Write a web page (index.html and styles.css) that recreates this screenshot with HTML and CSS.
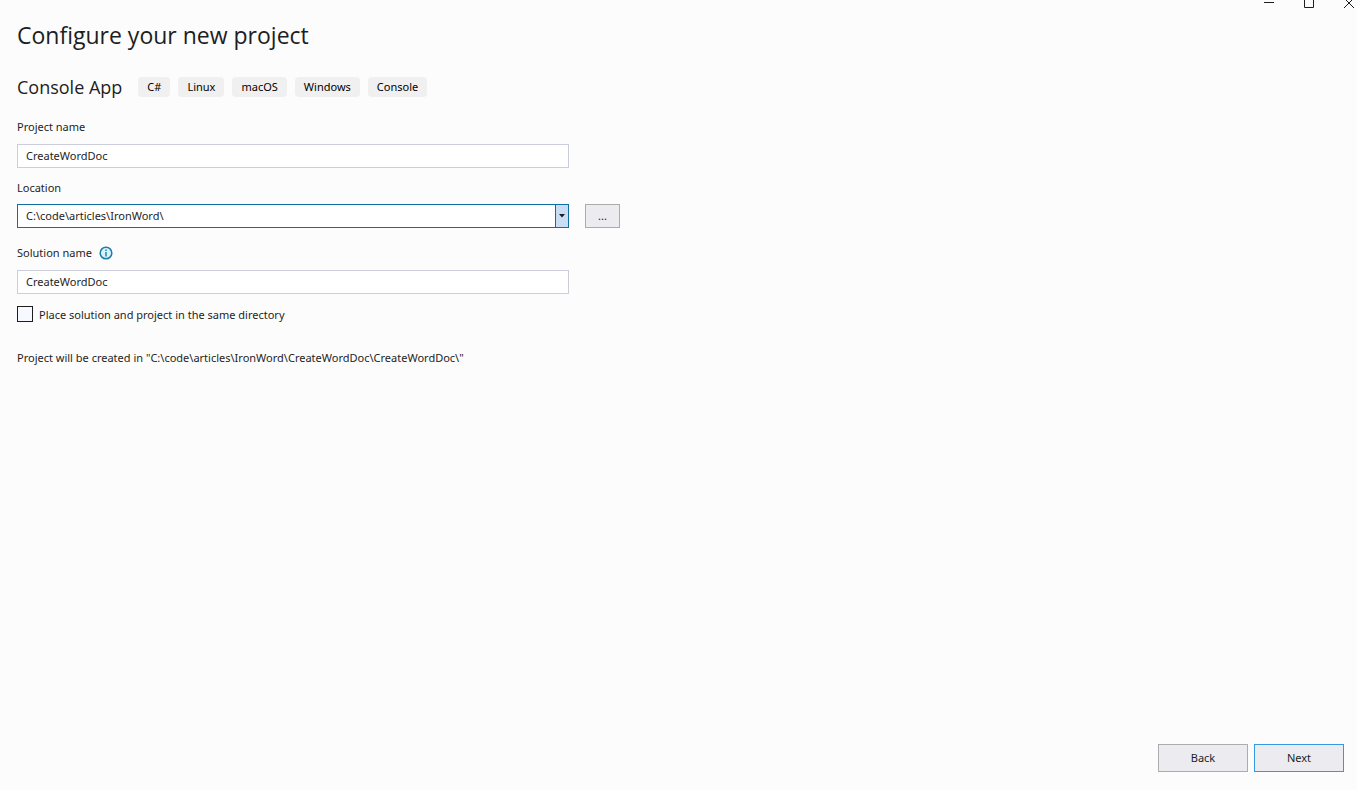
FILE: index.html
```html
<!DOCTYPE html>
<html lang="en">
<head>
    <meta charset="UTF-8">
    <meta name="viewport" content="width=device-width, initial-scale=1.0">
    <title>Configure your new project</title>
    <link rel="stylesheet" href="styles.css">
</head>
<body>
    <header class="titlebar">
        <button type="button" class="window-btn" aria-label="Minimize">
            <svg width="12" height="10" viewBox="0 0 12 10"><path d="M1 2.5h10" stroke="#1e1e1e" fill="none"/></svg>
        </button>
        <button type="button" class="window-btn" aria-label="Maximize">
            <svg width="12" height="10" viewBox="0 0 12 10"><path d="M1.5 -2.5h9v10h-9z" stroke="#1e1e1e" fill="none"/></svg>
        </button>
        <button type="button" class="window-btn" aria-label="Close">
            <svg width="12" height="10" viewBox="0 0 12 10"><path d="M1 -2l10 10M11 -2l-10 10" stroke="#1e1e1e" fill="none"/></svg>
        </button>
    </header>

    <form class="project-form" id="projectForm">
        <main class="content">
            <h1>Configure your new project</h1>

            <div class="template">
                <h2>Console App</h2>
                <ul class="tags">
                    <li>C#</li>
                    <li>Linux</li>
                    <li>macOS</li>
                    <li>Windows</li>
                    <li>Console</li>
                </ul>
            </div>

            <div class="field">
                <label for="projectName">Project name</label>
                <input type="text" id="projectName" class="text-input" value="CreateWordDoc">
            </div>

            <div class="field location">
                <label for="location">Location</label>
                <div class="location-row">
                    <div class="combo">
                        <input type="text" id="location" value="C:\code\articles\IronWord\">
                        <button type="button" class="combo-arrow" aria-label="Recent locations">
                            <svg width="6" height="4" viewBox="0 0 6 4"><path d="M0 0h6L3 3.5z" fill="#1e1e1e"/></svg>
                        </button>
                    </div>
                    <button type="button" class="btn browse" aria-label="Browse">...</button>
                </div>
            </div>

            <div class="field solution">
                <div class="label-row">
                    <label for="solutionName">Solution name</label>
                    <svg class="info" width="14" height="14" viewBox="0 0 14 14">
                        <circle cx="7" cy="7" r="5.8" fill="#d9f1f8" stroke="#1b7fa6" stroke-width="1.5"/>
                        <path d="M7 6v4.5M7 3.5v1.4" stroke="#1b7fa6" stroke-width="1.4" fill="none"/>
                    </svg>
                </div>
                <input type="text" id="solutionName" class="text-input" value="CreateWordDoc">
            </div>

            <div class="check-row">
                <input type="checkbox" id="sameDirectory">
                <label for="sameDirectory">Place solution and project in the same directory</label>
            </div>

            <p class="summary">Project will be created in "C:\code\articles\IronWord\CreateWordDoc\CreateWordDoc\"</p>
        </main>

        <footer class="actions">
            <button type="button" class="btn">Back</button>
            <button type="submit" class="btn primary">Next</button>
        </footer>
    </form>
</body>
</html>
```
FILE: styles.css
```css
* {
    box-sizing: border-box;
}

body {
    margin: 0;
    min-height: 100vh;
    display: flex;
    flex-direction: column;
    font-family: 'Noto Sans', 'Open Sans', sans-serif;
    font-size: 11px;
    line-height: 16px;
    color: #1e1e1e;
    background: #fcfcfc;
}

input,
button {
    font: inherit;
    color: inherit;
}

.titlebar {
    display: flex;
    justify-content: flex-end;
    gap: 28px;
    height: 17px;
    padding-right: 2px;
}

.window-btn {
    display: flex;
    align-items: flex-start;
    padding: 0;
    border: none;
    background: none;
}

.project-form {
    flex: 1;
    display: flex;
    flex-direction: column;
    justify-content: space-between;
    padding: 0 13px 18px 17px;
}

h1,
h2 {
    margin: 0;
    font-family: 'Open Sans', sans-serif;
    font-weight: 400;
}

h1 {
    font-size: 23px;
    line-height: 36px;
}

.template {
    display: flex;
    align-items: center;
    gap: 16px;
    margin-top: 20px;
}

h2 {
    font-size: 18px;
    line-height: 28px;
}

.tags {
    display: flex;
    gap: 8px;
    margin: 0;
    padding: 0;
    list-style: none;
}

.tags li {
    padding: 2px 9px;
    border-radius: 4px;
    background: #f0f0f0;
    color: #000;
}

.field {
    display: flex;
    flex-direction: column;
    gap: 9px;
    max-width: 603px;
    margin-top: 12px;
}

.template + .field {
    margin-top: 18px;
}

.location {
    gap: 8px;
}

.text-input,
.combo {
    width: 100%;
    max-width: 552px;
    height: 24px;
    border: 1px solid #cccedb;
    background: #fff;
}

.text-input {
    padding: 0 8px 2px;
}

.location-row {
    display: flex;
    gap: 16px;
}

.combo {
    display: flex;
    border-color: #0e70a0;
}

.combo input {
    flex: 1;
    min-width: 0;
    padding: 0 8px;
    border: none;
    background: none;
    outline: none;
}

.combo-arrow {
    display: flex;
    align-items: center;
    justify-content: center;
    width: 13px;
    padding: 0;
    border: none;
    border-left: 1px solid #0e70a0;
    background: #c9def5;
}

.btn {
    width: 90px;
    height: 28px;
    padding: 0;
    border: 1px solid #acacac;
    background: #ececf0;
}

.browse {
    flex: none;
    width: 35px;
    height: 24px;
}

.primary {
    border-color: #3399e0;
}

.solution {
    margin-top: 17px;
}

.label-row {
    display: flex;
    align-items: center;
    gap: 7px;
}

.check-row {
    display: flex;
    align-items: flex-start;
    gap: 6px;
    margin-top: 12px;
}

.check-row input {
    appearance: none;
    width: 16px;
    height: 16px;
    margin: 0;
    border: 1px solid #1e1e1e;
    background: #f6f9ff;
}

.check-row label {
    line-height: 18px;
}

.summary {
    margin: 26px 0 0;
}

.actions {
    display: flex;
    justify-content: flex-end;
    gap: 6px;
}
```
